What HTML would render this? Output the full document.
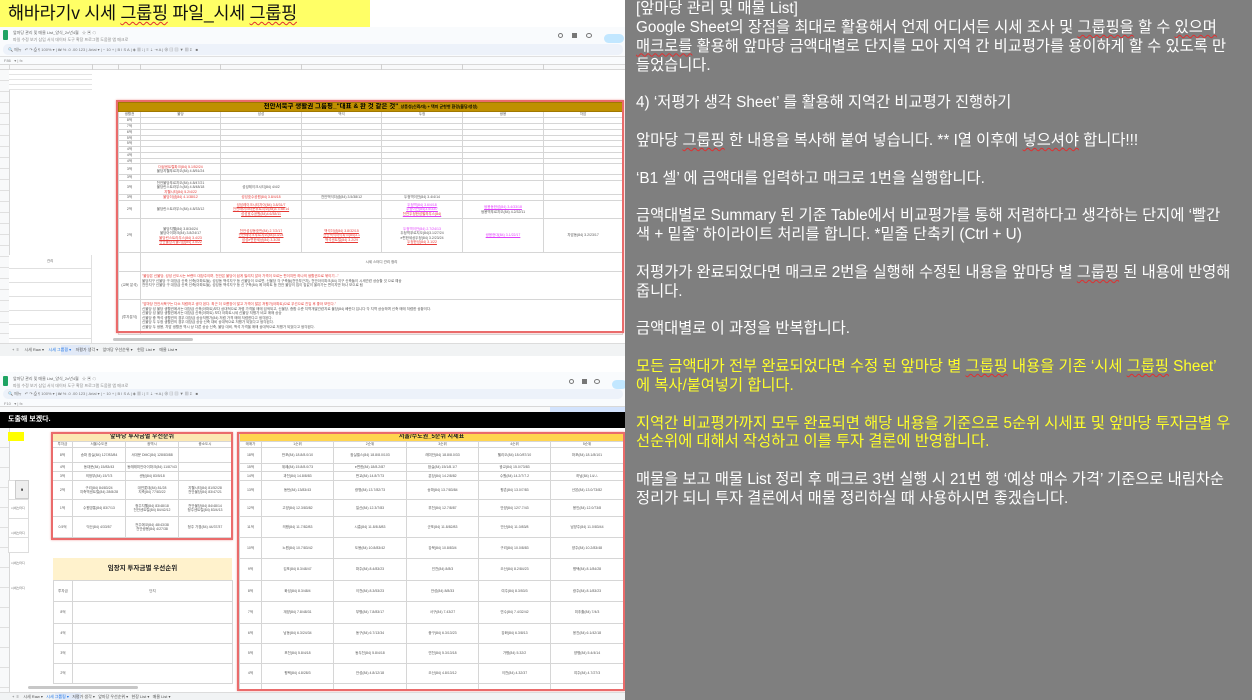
<!DOCTYPE html>
<html><head><meta charset="utf-8">
<style>
*{margin:0;padding:0;box-sizing:border-box}
body{width:1252px;height:700px;overflow:hidden;background:#fff;position:relative;font-family:"Liberation Sans","Noto Sans CJK KR",sans-serif}
.a{position:absolute}
.right{left:625px;top:0;width:627px;height:700px;background:#7f7f7f;color:#fff;font-family:"Liberation Sans","Noto Sans CJK KR",sans-serif;font-size:15.3px;letter-spacing:0px;line-height:18.85px;padding:0 0 0 11px;white-space:nowrap;overflow:hidden}
.y{color:#ffff2a}
.sq{text-decoration:underline wavy #e03030;text-decoration-thickness:1px;text-underline-offset:2px}
.chrome{background:#f9fbfd}
.tb{background:#edf2fa;border-radius:5px}
.t{font-size:4px;line-height:5px;color:#666;white-space:nowrap;overflow:hidden}
table{border-collapse:collapse;table-layout:fixed;position:absolute}
td{border:1px solid #d6d6d6;font-size:3.5px;line-height:4.5px;color:#555;text-align:center;overflow:hidden;white-space:nowrap;padding:0}
.r{color:#e53935}.p{color:#e040fb}
.redbox{position:absolute;border:2px solid #ea6b6b;box-shadow:0 0 2px #f2a0a0}
.hl{position:absolute;background:#e2e2e2;height:1px}
.vl{position:absolute;background:#e2e2e2;width:1px}
</style></head><body>

<!-- title -->
<div class="a" style="left:0;top:0;width:370px;height:27px;background:#ffff66"></div>
<div class="a" style="left:8px;top:2px;font-size:17.5px;line-height:22px;color:#111;white-space:nowrap;letter-spacing:-0.3px">해바라기v 시세 <span class="sq">그룹핑</span> 파일_시세 <span class="sq">그룹핑</span></div>

<!-- ===== Sheet 1 ===== -->
<div class="a chrome" style="left:0;top:27px;width:625px;height:37px"></div>
<div class="a" style="left:3px;top:30px;width:5px;height:10px;background:#1fa463;border-radius:1px"></div>
<div class="a t" style="left:13px;top:30px">앞마당 관리 및 매물 List_양식_2x년4월 &nbsp; ☆ ▣ ☁</div>
<div class="a t" style="left:13px;top:37px;color:#888">파일 수정 보기 삽입 서식 데이터 도구 확장 프로그램 도움말 앱 매크로</div>
<div class="a" style="left:558px;top:33px;width:5px;height:5px;border:1px solid #777;border-radius:50%"></div>
<div class="a" style="left:572px;top:33px;width:5px;height:5px;background:#777"></div>
<div class="a" style="left:586px;top:33px;width:6px;height:5px;border:1px solid #777;border-radius:50%"></div>
<div class="a" style="left:604px;top:34px;width:20px;height:9px;background:#c2e7ff;border-radius:5px"></div>
<div class="a tb" style="left:3px;top:44px;width:620px;height:11px"></div>
<div class="a t" style="left:8px;top:47px;color:#777">🔍 메뉴 &nbsp; ↶ ↷ ⎙ ¶ 100% ▾ | ₩ % .0 .00 123 | Arial ▾ | − 10 + | B I S A | ◈ ▦ ⁞ | ≡ ⇣ ⇥ A | ⊕ ▤ ▥ ▼ ▦ Σ &nbsp; ■</div>
<div class="a" style="left:0;top:56px;width:625px;height:1px;background:#e0e0e0"></div>
<div class="a t" style="left:4px;top:58px;color:#888">F86 &nbsp; ▾ | fx</div>
<div class="a" style="left:0;top:64px;width:625px;height:6px;background:#f8f9fa;border-top:1px solid #d8d8d8;border-bottom:1px solid #d8d8d8"></div>
<div class="vl" style="left:9px;top:64px;height:280px;background:#d8d8d8"></div>
<div class="vl" style="left:92px;top:64px;height:6px;background:#d0d0d0"></div>
<div class="vl" style="left:118px;top:64px;height:6px;background:#d0d0d0"></div>
<div class="vl" style="left:140px;top:64px;height:6px;background:#d0d0d0"></div>
<div class="vl" style="left:220px;top:64px;height:6px;background:#d0d0d0"></div>
<div class="vl" style="left:301px;top:64px;height:6px;background:#d0d0d0"></div>
<div class="vl" style="left:381px;top:64px;height:6px;background:#d0d0d0"></div>
<div class="vl" style="left:462px;top:64px;height:6px;background:#d0d0d0"></div>
<div class="vl" style="left:543px;top:64px;height:6px;background:#d0d0d0"></div>
<div class="a" style="left:0;top:70px;width:92px;height:20px;background:repeating-linear-gradient(#fff 0 4px,#e4e4e4 4px 5px)"></div>
<div class="a" style="left:0;top:70px;width:9px;height:275px;background:repeating-linear-gradient(#f8f9fa 0 10px,#e0e0e0 10px 11px)"></div>
<div class="a" style="left:9px;top:255px;width:83px;height:90px;background:repeating-linear-gradient(#fff 0 13px,#e0e0e0 13px 14px);border-right:1px solid #e0e0e0"></div>
<div class="a t" style="left:47px;top:259px;font-size:3.5px">관리</div>

<table style="left:118px;top:102px;width:504px">
<colgroup><col style="width:22px"><col style="width:80px"><col style="width:81px"><col style="width:80px"><col style="width:81px"><col style="width:81px"><col style="width:79px"></colgroup>
<tr style="height:9px"><td colspan="7" style="background:#bf9000;color:#000;font-size:6.5px;line-height:8px;font-weight:bold;border-color:#a07800">천안서북구 생활권 그룹핑_"대표 &amp; 완 것 같은 것"<span style="font-size:4px">_상품성(신뢰/대) + 택지 균형형 환경(불당/성성)</span></td></tr>
<tr style="height:6px"><td>생활권</td><td>불당</td><td>성성</td><td>백석</td><td>두정</td><td>쌍용</td><td>차암</td></tr>
<tr style="height:6px"><td>8억</td><td></td><td></td><td></td><td></td><td></td><td></td></tr>
<tr style="height:5px"><td>7억</td><td></td><td></td><td></td><td></td><td></td><td></td></tr>
<tr style="height:6px"><td>6억</td><td></td><td></td><td></td><td></td><td></td><td></td></tr>
<tr style="height:5px"><td>5억</td><td></td><td></td><td></td><td></td><td></td><td></td></tr>
<tr style="height:6px"><td>5억</td><td></td><td></td><td></td><td></td><td></td><td></td></tr>
<tr style="height:6px"><td>4억</td><td></td><td></td><td></td><td></td><td></td><td></td></tr>
<tr style="height:5px"><td>4억</td><td></td><td></td><td></td><td></td><td></td><td></td></tr>
<tr style="height:5px"><td>4억</td><td></td><td></td><td></td><td></td><td></td><td></td></tr>
<tr style="height:11px"><td>3억</td><td><span class="r">더샵센트럴파크(84) 5.1/52/24</span><br>불당지웰푸르지오(84) 4.8/51/24</td><td></td><td></td><td></td><td></td><td></td></tr>
<tr style="height:5px"><td>3억</td><td></td><td></td><td></td><td></td><td></td><td></td></tr>
<tr style="height:13px"><td>3억</td><td>천안불당푸르지오(84) 4.8/47/21<br>불당린스트라우스(84) 4.8/48/18<br><span class="r">지웰시티(84) 5.2/4/22</span></td><td>성성레이크시티(84) 4/4/2</td><td></td><td></td><td></td><td></td></tr>
<tr style="height:6px"><td>3억</td><td class="r">불당더샵(84) 4.1/38/12</td><td class="r">성성호수공원(84) 3.8/4/18</td><td>천안백석더샵(84) 3.5/38/12</td><td>두정역이안(84) 3.4/4/14</td><td></td><td></td></tr>
<tr style="height:18px"><td>2억</td><td>불당린스트라우스(84) 4.8/33/12</td><td class="r" style="text-decoration:underline">성성레이크시티자이(84) 3.8/31/7<br>천안레이크타운푸르지오(84)3.7/38/14<br>성성호수공원(84)4.6/38/11</td><td></td><td class="p" style="text-decoration:underline">두정역(84) 3.6/4/18<br>두정이안(84)3.5/33/7<br><span class="r">천안두정한성필하우스(84)</span></td><td><span class="p" style="text-decoration:underline">쌍용동한성(84) 3.4/33/18</span><br>쌍용역푸르지오(84) 4.2/32/11</td><td></td></tr>
<tr style="height:34px"><td>2억</td><td>불당지웰(84) 3.8/34/24<br>불당아이파크(84) 3.8/24/17<br><span class="r" style="text-decoration:underline">불당린스트라우스(84) 3.4/23<br>천안불당지웰더샵(84) 3.5/22</span></td><td class="r" style="text-decoration:underline">천안성성동호반(84) 2.7/2/17<br>천안레이크푸르지오(84)3.3/24<br>성성e편한세상(84) 3.3/28</td><td class="r" style="text-decoration:underline">백석더샵(84) 3.8/32/15<br>천안백석아이파크(84)3.1<br>백석센트럴(84) 3.2/29</td><td><span class="p">두정역이안(84) 2.7/24/13</span><br>두정역푸르지오(84)3.1/27/24<br>e편한세상두정(84) 3.2/23/24<br><span class="r" style="text-decoration:underline">두정한성(84) 3.1/22</span></td><td class="p" style="text-decoration:underline">쌍용현대(84) 3.1/22/17</td><td>차암동(84) 3.2/23/17</td></tr>
<tr style="height:19px"><td></td><td colspan="6">시세 스터디 관리 정리</td></tr>
<tr style="height:28px"><td>(교육 분석)</td><td colspan="6" style="text-align:left;vertical-align:top;padding:2px 1px"><span class="r">"불당은 신불당, 성성 신도시는 브랜드 대장주이며, 천안은 불당이 쉽게 밀리지 않아 가격이 오르는 편이지만 하나의 생활권으로 묶이기..."</span><br>불당지구 신불당 구 대장급 신축 신축(아파트들), 성성동 백석지구 등 신불당이 오르면, 신불당 각 구축들(천안부근지), 천안아이파크(84) 지구 신축들이 시세관련 상승할 것 으로 예상<br>천안지구 신불당 구 대장급 신축 신축(아파트들), 성성동 백석지구 등 신 구축(84) 에 아파트 등 천안 불당이 집이 집값이 올라가는 편이지만 하나 모으로 됨</td></tr>
<tr style="height:35px"><td>(투자분석)</td><td colspan="6" style="text-align:left;vertical-align:top;padding:2px 1px"><span class="r">"앞마당 천안서북구는 다소 저렴하고 생각 된다. 최근 더 오름장이 많고 가격이 많은 저평가(아파트)으로 우선으로 진입 후 좋아 보인다."</span><br>신불당 성 불당 생활권에서는 대장급 신축(아파트)보다 상대적으로 저렴 가격을 매매 검색되고, 신불당, 종합 수준 지역개발관련지로 불당(84) 베란다 입니다 각 지역 상승하며 신축 매매 저렴한 상황이다.<br>신불당 성 불당 생활권에서는 대장급 신축(아파트) 보다 아파트시세 신불당 저평가 비교 매매 상승<br>신불당 중 백석 생활권의 경우 대장급 상승저평가(84) 저렴 가격 매매 저렴한다고 생각된다.<br>신불당 두 두정 생활권의 경우 대장급 상승 신축 대비 상대적으로 저평가 되었다고 생각된다.<br>신불당 두 쌍용, 차암 생활권 역시 상 다른 상승 신축, 불당 대비, 백석 가격을 매매 상대적으로 저평가 되었다고 생각된다.</td></tr>
</table>
<div class="redbox" style="left:116px;top:100px;width:508px;height:233px"></div>

<!-- tab bar 1 -->
<div class="a" style="left:0;top:343px;width:625px;height:13px;background:#f1f3f4;border-top:1px solid #dcdcdc"></div>
<div class="a" style="left:113px;top:338px;width:80px;height:3px;background:#c7c7c7;border-radius:2px"></div>
<div class="a" style="left:61px;top:345px;width:29px;height:10px;background:#e1e9f7"></div>
<div class="a t" style="left:12px;top:347px;color:#555">+ &nbsp;≡ &nbsp;&nbsp;&nbsp; 시세 Raw ▾ &nbsp;&nbsp; <span style="color:#1a73e8">시세 그룹핑 ▾</span> &nbsp;&nbsp; 저평가 생각 ▾ &nbsp;&nbsp; 앞마당 우선순위 ▾ &nbsp;&nbsp; 현장 List ▾ &nbsp;&nbsp; 매물 List ▾</div>

<!-- ===== Sheet 2 ===== -->
<div class="a chrome" style="left:0;top:372px;width:625px;height:34px"></div>
<div class="a" style="left:3px;top:376px;width:5px;height:10px;background:#1fa463;border-radius:1px"></div>
<div class="a t" style="left:13px;top:376px">앞마당 관리 및 매물 List_양식_2x년4월 &nbsp; ☆ ▣ ☁</div>
<div class="a t" style="left:13px;top:383px;color:#888">파일 수정 보기 삽입 서식 데이터 도구 확장 프로그램 도움말 앱 매크로</div>
<div class="a" style="left:569px;top:379px;width:5px;height:5px;border:1px solid #777;border-radius:50%"></div>
<div class="a" style="left:582px;top:379px;width:5px;height:5px;background:#777"></div>
<div class="a" style="left:594px;top:379px;width:6px;height:5px;border:1px solid #777;border-radius:50%"></div>
<div class="a" style="left:612px;top:380px;width:15px;height:9px;background:#c2e7ff;border-radius:5px"></div>
<div class="a tb" style="left:3px;top:389px;width:620px;height:10px"></div>
<div class="a t" style="left:8px;top:391px;color:#777">🔍 메뉴 &nbsp; ↶ ↷ ⎙ ¶ 100% ▾ | ₩ % .0 .00 123 | Arial ▾ | − 10 + | B I S A | ◈ ▦ ⁞ | ≡ ⇣ ⇥ A | ⊕ ▤ ▥ ▼ ▦ Σ &nbsp; ■</div>
<div class="a t" style="left:4px;top:401px;color:#888">F10 &nbsp; ▾ | fx</div>
<div class="a" style="left:0;top:406px;width:625px;height:6px;background:#f8f9fa;border-top:1px solid #d8d8d8"></div>
<div class="a" style="left:550px;top:407px;width:75px;height:5px;background:#d3e3fd"></div>
<div class="a" style="left:0;top:412px;width:625px;height:16px;background:#000"></div>
<div class="a" style="left:8px;top:415px;color:#fff;font-size:7px;line-height:10px;font-weight:bold">도출해 보겠다.</div>
<div class="a" style="left:0;top:428px;width:9px;height:265px;background:repeating-linear-gradient(#f8f9fa 0 19px,#e0e0e0 19px 20px)"></div>
<div class="vl" style="left:9px;top:428px;height:265px;background:#d8d8d8"></div>
<div class="a" style="left:8px;top:432px;width:16px;height:9px;background:#ffff00"></div>
<div class="a" style="left:8px;top:480px;width:21px;height:73px;border:1px solid #ddd;background:repeating-linear-gradient(#fff 0 18px,#ddd 18px 19px)"></div>
<div class="a" style="left:15px;top:480px;width:14px;height:19px;background:#eee;border:1px solid #ccc;font-size:4px;line-height:17px;text-align:center;font-weight:bold">9</div>
<div class="a t" style="left:11px;top:506px;font-size:3px">시세스터디<br><br><br><br><br>시세스터디<br><br><br><br><br><br>시세스터디<br><br><br><br><br>시세스터디</div>

<!-- box1 -->
<table style="left:52px;top:433px;width:179px">
<colgroup><col style="width:20px"><col style="width:53px"><col style="width:53px"><col style="width:53px"></colgroup>
<tr style="height:8px"><td colspan="4" style="background:#fce8b2;color:#222;font-size:6px;line-height:7px;font-weight:bold">앞마당 투자금별 우선순위</td></tr>
<tr style="height:6px"><td>투자금</td><td>서울/수도권</td><td>광역시</td><td>중소도시</td></tr>
<tr style="height:15px"><td>8억</td><td>송파 잠실(84) 127/83/84</td><td>서대문 DMC(84) 128/83/88</td><td></td></tr>
<tr style="height:9px"><td>4억</td><td>동대문(84) 15/83/43</td><td>동래래미안아이파크(84) 11/87/43</td><td></td></tr>
<tr style="height:9px"><td>3억</td><td>의정부(84) 15/7/3</td><td>센텀(84) 83/5/18</td><td></td></tr>
<tr style="height:19px"><td>2억</td><td>구리(84) 84/83/24<br>지축역센트럴(84) 28/8/28</td><td>대연롯데(84) 81/28<br>지축(84) 77/83/22</td><td>지웰시티(84) 81/52/28<br>천안불당(84) 83/47/21</td></tr>
<tr style="height:17px"><td>1억</td><td>수원영통(84) 83/7/13</td><td>청주지웰(84) 83/48/18<br>천안센트럴(84) 84/42/12</td><td>천안불당(84) 84/48/14<br>청주센트럴(84) 83/4/13</td></tr>
<tr style="height:21px"><td>0.5억</td><td>익산(84) 4/33/57</td><td>전주에코(84) 48/43/38<br>천안쌍용(84) 4/27/38</td><td>청주 가경(84) 44/37/37</td></tr>
</table>
<div class="redbox" style="left:51px;top:432px;width:182px;height:108px"></div>

<!-- 임장지 -->
<div class="a" style="left:53px;top:558px;width:179px;height:22px;background:#fff2cc;text-align:center;font-size:6.5px;line-height:22px;font-weight:bold;color:#222">임장지 투자금별 우선순위</div>
<table style="left:53px;top:580px;width:179px">
<colgroup><col style="width:19px"><col style="width:160px"></colgroup>
<tr style="height:21px"><td>투자금</td><td>단지</td></tr>
<tr style="height:22px"><td>8억</td><td></td></tr>
<tr style="height:20px"><td>4억</td><td></td></tr>
<tr style="height:20px"><td>3억</td><td></td></tr>
<tr style="height:20px"><td>2억</td><td></td></tr>
</table>

<!-- box2 -->
<table style="left:239px;top:433px;width:384px">
<colgroup><col style="width:22px"><col style="width:72px"><col style="width:73px"><col style="width:72px"><col style="width:72px"><col style="width:73px"></colgroup>
<tr style="height:8px"><td colspan="6" style="background:#ffd54f;color:#222;font-size:6px;line-height:7px;font-weight:bold">서울/수도권_5순위 시세표</td></tr>
<tr style="height:6px"><td>매매가</td><td>1순위</td><td>2순위</td><td>3순위</td><td>4순위</td><td>5순위</td></tr>
<tr style="height:16px"><td>18억</td><td>반포(84) 18.8/8.0/10</td><td>잠실엘스(84) 18.8/8.0/103</td><td>래미안(84) 18.8/8.0/33</td><td>헬리오(84) 18.0/87/10</td><td>마포(84) 18.1/8/101</td></tr>
<tr style="height:8px"><td>15억</td><td>위례(84) 15.8/8.0/73</td><td>e편한(84) 18/8.2/87</td><td>잠실(84) 15/1/8.1/7</td><td>광교(84) 15.0/73/83</td><td></td></tr>
<tr style="height:9px"><td>14억</td><td>과천(84) 14.8/8/83</td><td>판교(84) 14.8/7/73</td><td>분당(84) 14.2/8/82</td><td>수원(84) 14.2/7/7.2</td><td>하남(84) 14/-/-</td></tr>
<tr style="height:19px"><td>13억</td><td>동탄(84) 13/83/43</td><td>광명(84) 13.7/82/73</td><td>송파(84) 13.7/83/84</td><td>평촌(84) 13.0/7/83</td><td>산본(84) 13.0/73/82</td></tr>
<tr style="height:17px"><td>12억</td><td>고양(84) 12.3/83/82</td><td>일산(84) 12.3/7/83</td><td>부천(84) 12.7/8/87</td><td>안양(84) 12/7.7/43</td><td>용인(84) 12.0/73/8</td></tr>
<tr style="height:21px"><td>11억</td><td>의왕(84) 11.7/82/83</td><td>시흥(84) 11.8/8.8/83</td><td>군포(84) 11.8/82/83</td><td>안산(84) 11.0/83/8</td><td>남양주(84) 11.0/83/44</td></tr>
<tr style="height:21px"><td>10억</td><td>노원(84) 10.7/83/42</td><td>도봉(84) 10.8/83/42</td><td>강북(84) 10.8/83/4</td><td>구리(84) 10.0/8/83</td><td>양주(84) 10.2/83/48</td></tr>
<tr style="height:22px"><td>9억</td><td>김포(84) 8.3/48/47</td><td>파주(84) 8.4/83/23</td><td>인천(84) 8/8/3</td><td>오산(84) 8.2/84/23</td><td>평택(84) 8.1/84/28</td></tr>
<tr style="height:21px"><td>8억</td><td>화성(84) 8.3/48/4</td><td>이천(84) 8.3/53/23</td><td>안성(84) 8/8/33</td><td>여주(84) 8.3/53/3</td><td>광주(84) 8.1/83/23</td></tr>
<tr style="height:22px"><td>7억</td><td>계양(84) 7.8/48/31</td><td>부평(84) 7.8/83/17</td><td>서구(84) 7.43/27</td><td>연수(84) 7.4/32/42</td><td>미추홀(84) 7/4/3</td></tr>
<tr style="height:20px"><td>6억</td><td>남동(84) 6.3/24/34</td><td>동구(84) 6.7/13/34</td><td>중구(84) 6.3/13/23</td><td>강화(84) 6.3/8/13</td><td>옹진(84) 6.1/42/18</td></tr>
<tr style="height:20px"><td>5억</td><td>포천(84) 5.8/4/18</td><td>동두천(84) 5.8/4/18</td><td>연천(84) 5.3/13/18</td><td>가평(84) 5.32/2</td><td>양평(84) 5.4/4/14</td></tr>
<tr style="height:20px"><td>4억</td><td>평택(84) 4.8/28/3</td><td>안성(84) 4.8/12/18</td><td>오산(84) 4.8/13/12</td><td>이천(84) 4.32/37</td><td>여주(84) 4.7/27/3</td></tr>
<tr style="height:7px"><td></td><td></td><td></td><td></td><td></td><td></td></tr>
</table>
<div class="redbox" style="left:237px;top:432px;width:388px;height:259px"></div>

<!-- tab bar 2 -->
<div class="a" style="left:0;top:692px;width:625px;height:8px;background:#f1f3f4;border-top:1px solid #dcdcdc"></div>
<div class="a" style="left:28px;top:686px;width:110px;height:3px;background:#c7c7c7;border-radius:2px"></div>
<div class="a" style="left:55px;top:693px;width:26px;height:7px;background:#e1e9f7"></div>
<div class="a t" style="left:12px;top:694px;color:#555">+ &nbsp;≡ &nbsp;&nbsp; 시세 Raw ▾ &nbsp; <span style="color:#1a73e8">시세 그룹핑 ▾</span> &nbsp; 저평가 생각 ▾ &nbsp; 앞마당 우선순위 ▾ &nbsp; 현장 List ▾ &nbsp; 매물 List ▾</div>

<!-- ===== Right text panel ===== -->
<div class="a right">
[앞마당 관리 및 매물 List]<br>
Google Sheet의 장점을 최대로 활용해서 언제 어디서든 시세 조사 및 <span class="sq">그룹핑을</span> 할 수 <span class="sq">있으며</span><br>
<span class="sq">매크로를</span> 활용해 앞마당 금액대별로 단지를 모아 지역 간 비교평가를 용이하게 할 수 있도록 만<br>
들었습니다.<br>
<br>
4) ‘저평가 생각 Sheet’ 를 활용해 지역간 비교평가 진행하기<br>
<br>
앞마당 <span class="sq">그룹핑</span> 한 내용을 복사해 붙여 넣습니다. ** I열 이후에 <span class="sq">넣으셔야</span> 합니다!!!<br>
<br>
‘B1 셀’ 에 금액대를 입력하고 매크로 1번을 실행합니다.<br>
<br>
금액대별로 Summary 된 기준 Table에서 비교평가를 통해 저렴하다고 생각하는 단지에 ‘빨간<br>
색 + 밑줄’ 하이라이트 처리를 합니다. *밑줄 단축키 (Ctrl + U)<br>
<br>
저평가가 완료되었다면 매크로 2번을 실행해 수정된 내용을 앞마당 별 <span class="sq">그룹핑</span> 된 내용에 반영해<br>
줍니다.<br>
<br>
금액대별로 이 과정을 반복합니다.<br>
<br>
<span class="y">모든 금액대가 전부 완료되었다면 수정 된 앞마당 별 <span class="sq">그룹핑</span> 내용을 기존 ‘시세 <span class="sq">그룹핑</span> Sheet’<br>
에 복사/붙여넣기 합니다.<br>
<br>
지역간 비교평가까지 모두 완료되면 해당 내용을 기준으로 5순위 시세표 및 앞마당 투자금별 우<br>
선순위에 대해서 작성하고 이를 투자 결론에 반영합니다.</span><br>
<br>
매물을 보고 매물 List 정리 후 매크로 3번 실행 시 21번 행 ‘예상 매수 가격’ 기준으로 내림차순<br>
정리가 되니 투자 결론에서 매물 정리하실 때 사용하시면 좋겠습니다.
</div>
</body></html>
